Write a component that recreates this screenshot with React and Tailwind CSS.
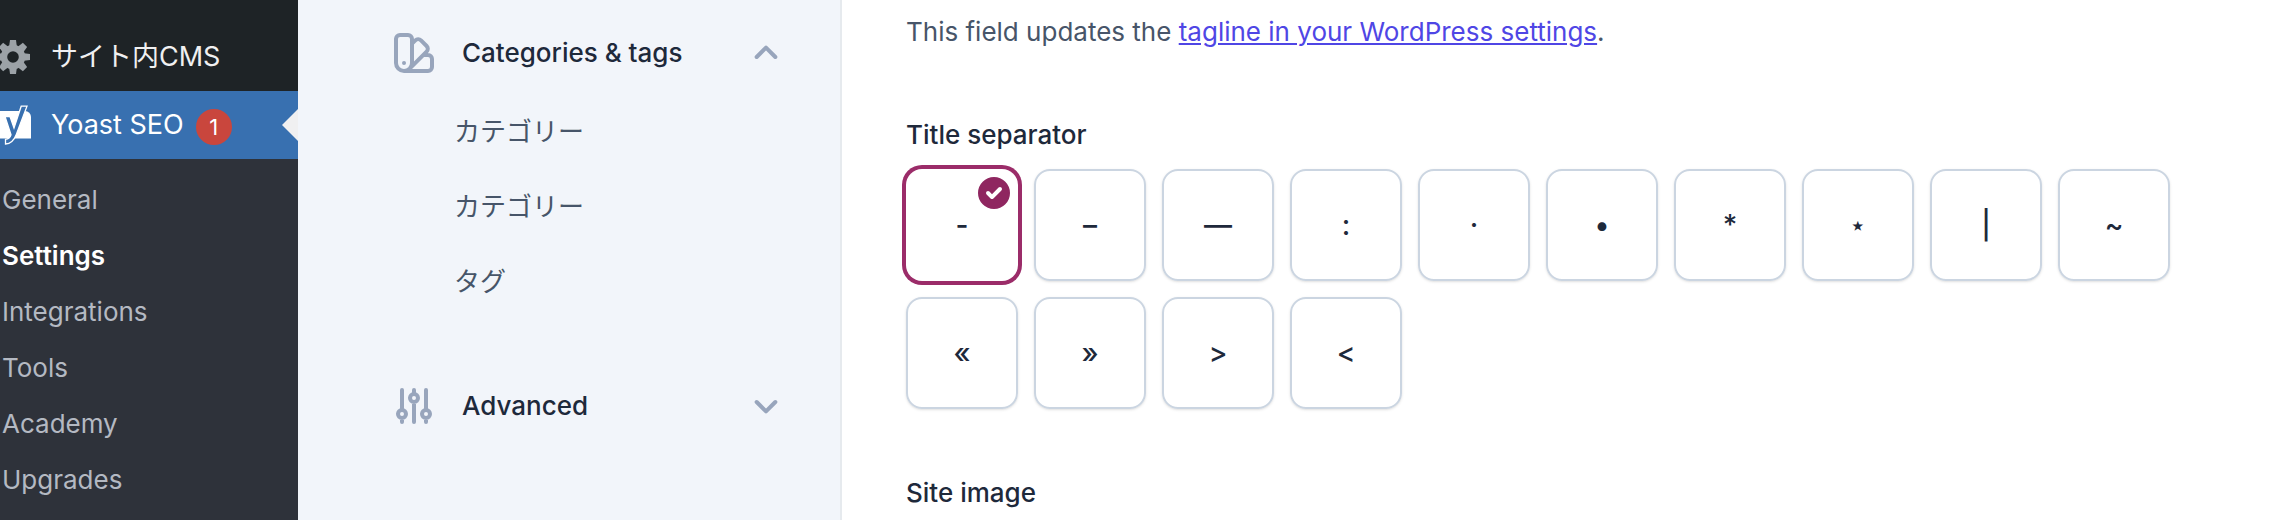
import React, { useState } from "react";

const submenu = ["General", "Settings", "Integrations", "Tools", "Academy", "Upgrades"];

const separators = [
  { name: "Dash", glyph: "-" },
  { name: "En dash", glyph: "–" },
  { name: "Em dash", glyph: "—" },
  { name: "Colon", glyph: ":" },
  { name: "Middle dot", glyph: "·" },
  { name: "Bullet", glyph: "•" },
  { name: "Asterisk", glyph: "*" },
  { name: "Low asterisk", glyph: "⋆" },
  { name: "Vertical bar", glyph: "|" },
  { name: "Tilde", glyph: "~" },
  { name: "Left angle quotes", glyph: "«" },
  { name: "Right angle quotes", glyph: "»" },
  { name: "Greater than", glyph: ">" },
  { name: "Less than", glyph: "<" },
];

function GearIcon() {
  return (
    <svg viewBox="-18 -18 36 36" className="size-9 shrink-0 text-[#9ca2a7]" fill="currentColor" aria-hidden="true">
      <circle r="9" fill="none" stroke="currentColor" strokeWidth="6.4" />
      {[0, 45, 90, 135, 180, 225, 270, 315].map((angle) => (
        <path key={angle} d="M-3.8 -11 L-3 -17 H3 L3.8 -11 Z" transform={`rotate(${angle})`} />
      ))}
    </svg>
  );
}

function YoastIcon() {
  return (
    <svg viewBox="-5 104 36 42" className="h-[42px] w-9 shrink-0" aria-hidden="true">
      <path d="M-8 117a6 6 0 0 1 6-6H25a6 6 0 0 1 6 6V138.500H-8z" fill="#fff" />
      <path
        d="M5 116.500h5l4 11.500 7.200-21.800h5.800l-10.700 28.300c-2.300 6-5 9.300-10.800 9.500v-4.700c3.300-.5 4.800-2.200 5.500-4.600z"
        fill="#3870b0"
        stroke="#fff"
        strokeWidth="1.300"
      />
    </svg>
  );
}

function SwatchIcon() {
  return (
    <svg viewBox="0 0 24 24" className="size-12 shrink-0 text-[#98a5bc]" fill="none" stroke="currentColor" strokeWidth="2" strokeLinecap="round" strokeLinejoin="round" aria-hidden="true">
      <path d="M7 21a4 4 0 01-4-4V5a2 2 0 012-2h4a2 2 0 012 2v12a4 4 0 01-4 4zm0 0h12a2 2 0 002-2v-4a2 2 0 00-2-2h-2.343M11 7.343l1.657-1.657a2 2 0 012.828 0l2.829 2.829a2 2 0 010 2.828l-8.486 8.485M7 17h.01" />
    </svg>
  );
}

function SlidersIcon() {
  return (
    <svg viewBox="0 0 24 24" className="size-12 shrink-0 text-[#98a5bc]" fill="none" stroke="currentColor" strokeWidth="2" strokeLinecap="round" strokeLinejoin="round" aria-hidden="true">
      <path d="M12 6V4m0 2a2 2 0 100 4m0-4a2 2 0 110 4m-6 8a2 2 0 100-4m0 4a2 2 0 110-4m0 4v2m0-6V4m6 6v10m6-2a2 2 0 100-4m0 4a2 2 0 110-4m0 4v2m0-6V4" />
    </svg>
  );
}

function Chevron({ up }) {
  return (
    <svg viewBox="0 0 24 24" className="ml-auto size-8 shrink-0 text-[#98a5bc]" fill="none" stroke="currentColor" strokeWidth="3" strokeLinecap="round" strokeLinejoin="round" aria-hidden="true">
      <path d={up ? "M5 15l7-7 7 7" : "M19 9l-7 7-7-7"} />
    </svg>
  );
}

function CheckBadge() {
  return (
    <svg viewBox="2 2 16 16" className="absolute top-2 right-2 size-8 text-[#8f2660]" fill="currentColor" aria-hidden="true">
      <path fillRule="evenodd" clipRule="evenodd" d="M10 18a8 8 0 100-16 8 8 0 000 16zm3.707-9.293a1 1 0 00-1.414-1.414L9 10.586 7.707 9.293a1 1 0 00-1.414 1.414l2 2a1 1 0 001.414 0l4-4z" />
    </svg>
  );
}

function NavGroup({ icon, title, open, onToggle, children }) {
  return (
    <section>
      <button type="button" aria-expanded={open} onClick={onToggle} className="flex h-12 w-full items-center gap-6 text-left font-medium text-[#1e293b]">
        {icon}
        <span>{title}</span>
        <Chevron up={open} />
      </button>
      {children}
    </section>
  );
}

export default function App() {
  const [selected, setSelected] = useState("Dash");
  const [tagsOpen, setTagsOpen] = useState(true);
  const [advancedOpen, setAdvancedOpen] = useState(false);

  return (
    <div className="flex min-h-screen bg-white font-[Inter,'Noto_Sans_CJK_JP',sans-serif] text-[26px] leading-10">
      <aside className="w-[298px] shrink-0 overflow-hidden bg-[#2e323a]">
        <div className="bg-[#1e2326] pt-[23px]">
          <a href="#cms" className="-ml-[5px] flex h-[68px] items-center gap-5 text-[27px] text-[#f0f0f1]">
            <GearIcon />
            <span>サイト内CMS</span>
          </a>
        </div>
        <a href="#yoast" className="flex h-[68px] items-center bg-[#3870b0] text-[27px] text-white">
          <span className="-ml-[5px] flex items-center gap-5">
            <YoastIcon />
            <span>Yoast SEO</span>
          </span>
          <span className="mt-1 ml-3 flex size-9 items-center justify-center rounded-full bg-[#c9463d] text-[22px]">1</span>
          <svg viewBox="0 0 16 32" className="ml-auto h-8 w-4" aria-hidden="true">
            <path d="M16 0V32L0 16z" fill="#f0f0f1" />
          </svg>
        </a>
        <nav aria-label="Yoast SEO" className="flex flex-col pt-[13px] pl-[2px]">
          {submenu.map((item) => (
            <a
              key={item}
              href={`#${item.toLowerCase()}`}
              className={item === "Settings" ? "leading-[56px] font-semibold text-white" : "leading-[56px] text-[#b4b9c2]"}
            >
              {item}
            </a>
          ))}
        </nav>
      </aside>

      <nav aria-label="Settings" className="w-[544px] shrink-0 border-r-2 border-[#e6eaee] bg-[#f2f5fa] pt-[29px] pr-[58px] pl-[92px]">
        <NavGroup icon={<SwatchIcon />} title="Categories & tags" open={tagsOpen} onToggle={() => setTagsOpen(!tagsOpen)}>
          {tagsOpen && (
            <ul className="flex flex-col gap-[35px] pt-[35px] pl-16 text-[#475569]">
              <li><a href="#category">カテゴリー</a></li>
              <li><a href="#category-2">カテゴリー</a></li>
              <li><a href="#tag">タグ</a></li>
            </ul>
          )}
        </NavGroup>
        <div className="pt-20">
          <NavGroup icon={<SlidersIcon />} title="Advanced" open={advancedOpen} onToggle={() => setAdvancedOpen(!advancedOpen)} />
        </div>
      </nav>

      <main className="min-w-0 flex-1 px-16 pt-3 text-[#1e293b]">
        <p className="text-[#475569]">
          This field updates the{" "}
          <a href="#tagline" className="text-[#4f46e5] underline">tagline in your WordPress settings</a>.
        </p>
        <fieldset className="pt-[63px]">
          <legend className="contents font-medium">Title separator</legend>
          <div className="mt-[14px] flex max-w-[1280px] flex-wrap gap-4">
            {separators.map(({ name, glyph }) => {
              const active = name === selected;
              return (
                <label
                  key={name}
                  className={
                    active
                      ? "relative flex size-28 items-center justify-center rounded-2xl text-[28px] font-medium ring-4 ring-[#9b2c69]"
                      : "relative flex size-28 items-center justify-center rounded-2xl border-2 border-[#cbd5e1] text-[28px] font-medium shadow-sm"
                  }
                >
                  <input
                    type="radio"
                    name="separator"
                    aria-label={name}
                    checked={active}
                    onChange={() => setSelected(name)}
                    className="sr-only"
                  />
                  {glyph}
                  {active && <CheckBadge />}
                </label>
              );
            })}
          </div>
        </fieldset>
        <h2 className="pt-16 font-medium">Site image</h2>
      </main>
    </div>
  );
}
